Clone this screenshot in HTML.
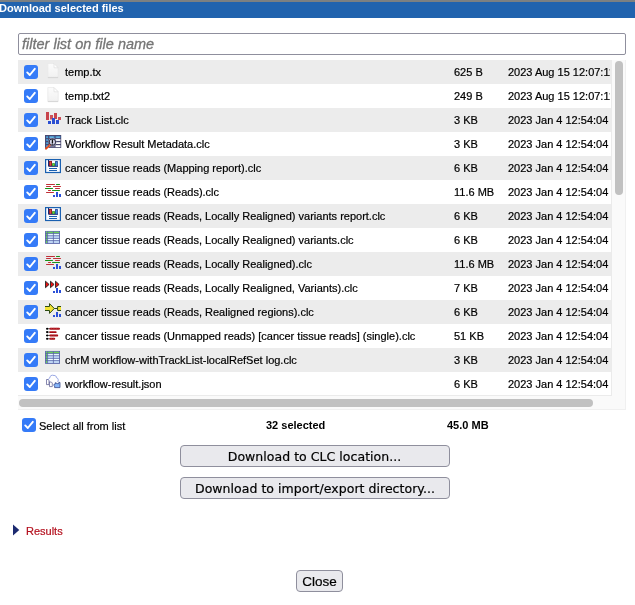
<!DOCTYPE html>
<html><head><meta charset="utf-8">
<style>
html,body{margin:0;padding:0;background:#fff;}
body{width:635px;height:605px;overflow:hidden;position:relative;font-family:"Liberation Sans",Arial,sans-serif;font-size:11px;color:#000;-webkit-text-stroke:0.2px currentColor;}
#w{position:absolute;left:0;top:0;width:635px;height:605px;will-change:transform;}
.topbar{position:absolute;left:0;top:0;width:635px;height:2px;background:#7c8082;}
.hdr{position:absolute;left:0;top:2px;width:635px;height:16px;background:#2163ae;color:#fff;font-weight:bold;font-size:11px;line-height:14px;white-space:nowrap;-webkit-text-stroke:0;}
.hdr span{position:absolute;left:-1px;top:0;transform:translateY(-0.75px);}
.filter{position:absolute;left:18px;top:33px;width:608px;height:22px;box-sizing:border-box;border:1px solid #8f8f9d;border-radius:2px;background:#fff;}
.filter span{position:absolute;left:3px;top:1px;font-style:italic;font-size:14.5px;line-height:18px;color:#757575;white-space:nowrap;-webkit-text-stroke:0.3px #757575;}
.list{position:absolute;left:18px;top:60px;width:608px;height:350px;overflow:hidden;background:#fff;}
.row{position:absolute;left:0;width:593px;height:24px;white-space:nowrap;overflow:hidden;}
.row.g{background:#ececec;}
.row .t{position:absolute;left:47px;top:0;line-height:24px;}
.row .s{position:absolute;left:436px;top:0;line-height:24px;}
.row .d{position:absolute;left:490px;top:0;line-height:24px;width:101.5px;overflow:hidden;}
.cb{position:absolute;width:14px;height:14px;border-radius:3px;background:#357bf8;}
.cb svg{position:absolute;left:0;top:0;}
.row .cb{left:6px;top:5px;}
.row .ic{position:absolute;left:27px;top:0;width:18px;height:24px;}
.vtrack{position:absolute;left:593px;top:0;width:15px;height:350px;background:#fafafa;box-sizing:border-box;border-left:1px solid #ebebeb;border-right:1px solid #f0f0f0;}
.vthumb{position:absolute;left:597px;top:1px;width:8px;height:134px;border-radius:4px;background:#c1c1c1;}
.htrack{position:absolute;left:0;top:335px;width:608px;height:15px;background:#fafafa;box-sizing:border-box;border-bottom:1px solid #f0f0f0;border-right:1px solid #f0f0f0;}
.htop{position:absolute;left:0;top:335px;width:594px;height:1px;background:#ebebeb;}
.hthumb{position:absolute;left:1px;top:339px;width:574px;height:8px;border-radius:4px;background:#c1c1c1;}
.selall{position:absolute;left:39px;top:419px;line-height:14px;}
.b{font-weight:bold;-webkit-text-stroke:0;}
.btn{position:absolute;box-sizing:border-box;border:1px solid #8f8f9d;border-radius:4px;background:#e9e9ed;letter-spacing:0.035px;padding-right:1px;font-family:"DejaVu Sans","Liberation Sans",sans-serif;font-size:12.5px;text-align:center;white-space:nowrap;color:#000;}
</style></head><body><div id="w">
<svg width="0" height="0" style="position:absolute"><defs><linearGradient id="dg" x1="0" y1="0" x2="0" y2="1"><stop offset="0" stop-color="#fcfcfc"/><stop offset="1" stop-color="#f1f1f1"/></linearGradient></defs></svg>
<div class="topbar"></div>
<div class="hdr"><span>Download selected files</span></div>
<div class="filter"><span>filter list on file name</span></div>
<div class="list" id="list">
<!--ROWS-->
<div class="row g" style="top:0px"><div class="cb"><svg width="14" height="14" viewBox="0 0 14 14"><path d="M3.2 7.4 L5.8 10 L10.8 3.8" fill="none" stroke="#fff" stroke-width="1.9" stroke-linecap="round" stroke-linejoin="round"/></svg></div><svg class="ic" width="18" height="24" viewBox="0 0 18 24"><path d="M2.8 3.6 H9 L13.2 7.8 V17.3 H2.8 Z" fill="url(#dg)" stroke="#e8e8e8" stroke-width="0.8"/><path d="M2.9 17.6 H13.1" stroke="#d2d2d2" stroke-width="0.9"/><path d="M9 3.6 V7.8 H13.2 Z" fill="#fefefe" stroke="#e0e0e0" stroke-width="0.7"/></svg><span class="t">temp.tx</span><span class="s">625 B</span><span class="d">2023 Aug 15 12:07:11</span></div>
<div class="row" style="top:24px"><div class="cb"><svg width="14" height="14" viewBox="0 0 14 14"><path d="M3.2 7.4 L5.8 10 L10.8 3.8" fill="none" stroke="#fff" stroke-width="1.9" stroke-linecap="round" stroke-linejoin="round"/></svg></div><svg class="ic" width="18" height="24" viewBox="0 0 18 24"><path d="M2.8 3.6 H9 L13.2 7.8 V17.3 H2.8 Z" fill="url(#dg)" stroke="#e8e8e8" stroke-width="0.8"/><path d="M2.9 17.6 H13.1" stroke="#d2d2d2" stroke-width="0.9"/><path d="M9 3.6 V7.8 H13.2 Z" fill="#fefefe" stroke="#e0e0e0" stroke-width="0.7"/></svg><span class="t">temp.txt2</span><span class="s">249 B</span><span class="d">2023 Aug 15 12:07:11</span></div>
<div class="row g" style="top:48px"><div class="cb"><svg width="14" height="14" viewBox="0 0 14 14"><path d="M3.2 7.4 L5.8 10 L10.8 3.8" fill="none" stroke="#fff" stroke-width="1.9" stroke-linecap="round" stroke-linejoin="round"/></svg></div><svg class="ic" width="18" height="24" viewBox="0 0 18 24"><rect x="1" y="4" width="3" height="8" fill="#c8444c"/><rect x="5" y="7" width="3" height="4.5" fill="#cc5058"/><rect x="9" y="5" width="3" height="6" fill="#c8444c"/><rect x="13" y="9" width="3" height="3" fill="#cc5058"/><rect x="3" y="13" width="3" height="3" fill="#2a4ed2"/><rect x="7" y="10" width="3" height="6" fill="#2a4ed2"/><rect x="11" y="12" width="3" height="4" fill="#2a4ed2"/></svg><span class="t">Track List.clc</span><span class="s">3 KB</span><span class="d">2023 Jan 4 12:54:04</span></div>
<div class="row" style="top:72px"><div class="cb"><svg width="14" height="14" viewBox="0 0 14 14"><path d="M3.2 7.4 L5.8 10 L10.8 3.8" fill="none" stroke="#fff" stroke-width="1.9" stroke-linecap="round" stroke-linejoin="round"/></svg></div><svg class="ic" width="18" height="24" viewBox="0 0 18 24"><rect x="0" y="3" width="16.2" height="12.9" fill="#4a4a72"/><rect x="1.1" y="4.2" width="2" height="1.9" fill="#3a92cc"/><rect x="4.1" y="4.2" width="5.4" height="1.9" fill="#3a92cc"/><rect x="10.5" y="4.2" width="4.9" height="1.9" fill="#3a92cc"/><rect x="5" y="4.7" width="3.6" height="0.9" fill="#8cc8ee"/><rect x="11.3" y="4.7" width="3.4" height="0.9" fill="#8cc8ee"/><rect x="1.7" y="4.7" width="0.8" height="0.9" fill="#8cc8ee"/><rect x="1.1" y="7.1" width="2" height="1.8" fill="#3a92cc"/><rect x="4.1" y="7.1" width="5.4" height="1.8" fill="#7a7a9a"/><rect x="10.5" y="7.1" width="4.9" height="1.8" fill="#fff"/><rect x="1.7" y="7.6" width="0.8" height="0.9" fill="#8cc8ee"/><rect x="1.1" y="10.2" width="2" height="1.8" fill="#3a92cc"/><rect x="4.1" y="10.2" width="5.4" height="1.8" fill="#7a7a9a"/><rect x="10.5" y="10.2" width="4.9" height="1.8" fill="#fff"/><rect x="1.7" y="10.7" width="0.8" height="0.9" fill="#8cc8ee"/><rect x="1.1" y="13.2" width="2" height="1.9" fill="#3a92cc"/><rect x="4.1" y="13.2" width="5.4" height="1.9" fill="#7a7a9a"/><rect x="10.5" y="13.2" width="4.9" height="1.9" fill="#fff"/><rect x="1.7" y="13.7" width="0.8" height="0.9" fill="#8cc8ee"/><circle cx="7.4" cy="10.1" r="4" fill="#9c9cba"/><circle cx="7.4" cy="10.1" r="3.2" fill="#d2d2e8" stroke="#2a2a3c" stroke-width="1"/><circle cx="6.4" cy="9" r="1" fill="#f4f4ff" fill-opacity="0.8"/><path d="M7.4 7.9 V10.7" stroke="#111" stroke-width="1.3" stroke-linecap="round"/><circle cx="7.4" cy="12.1" r="0.7" fill="#111"/><path d="M4.7 13.3 L0.9 16.7" stroke="#e2481a" stroke-width="1.9" stroke-linecap="round"/><path d="M3.9 13.5 L4.9 14.4 M2.6 14.7 L3.6 15.6" stroke="#ffd0b0" stroke-width="0.5"/></svg><span class="t">Workflow Result Metadata.clc</span><span class="s">3 KB</span><span class="d">2023 Jan 4 12:54:04</span></div>
<div class="row g" style="top:96px"><div class="cb"><svg width="14" height="14" viewBox="0 0 14 14"><path d="M3.2 7.4 L5.8 10 L10.8 3.8" fill="none" stroke="#fff" stroke-width="1.9" stroke-linecap="round" stroke-linejoin="round"/></svg></div><svg class="ic" width="18" height="24" viewBox="0 0 18 24"><rect x="0.6" y="3.6" width="14.8" height="12.9" fill="#fafcff" stroke="#1a60b0" stroke-width="1.2"/><rect x="4" y="4.9" width="3" height="5.2" fill="#8a1522"/><rect x="4.7" y="5.7" width="1.5" height="4.4" fill="#e04a40"/><rect x="7.1" y="7.2" width="2.8" height="3" fill="#2a8a20"/><rect x="7.8" y="7.9" width="1.4" height="2.2" fill="#66dd33"/><rect x="10.1" y="5.1" width="2.7" height="5" fill="#1a3a90"/><rect x="10.8" y="5.9" width="1.3" height="4.2" fill="#3a90e0"/><path d="M3.5 4 V10.3 H13" stroke="#1a2a70" stroke-width="1" fill="none"/><path d="M4 12.5 H12 M4 14.5 H12" stroke="#1a60b0" stroke-width="1"/></svg><span class="t">cancer tissue reads (Mapping report).clc</span><span class="s">6 KB</span><span class="d">2023 Jan 4 12:54:04</span></div>
<div class="row" style="top:120px"><div class="cb"><svg width="14" height="14" viewBox="0 0 14 14"><path d="M3.2 7.4 L5.8 10 L10.8 3.8" fill="none" stroke="#fff" stroke-width="1.9" stroke-linecap="round" stroke-linejoin="round"/></svg></div><svg class="ic" width="18" height="24" viewBox="0 0 18 24"><path d="M1.5 4.5 H9.5 M1.5 6.5 H5.5 M8.5 6.5 H15.5 M10.5 8.5 H14.5 M3.5 10.5 H5.5 M1.5 12.5 H8.5" stroke="#c03038" stroke-width="1" stroke-linecap="round"/><path d="M11.5 4.5 H14.5 M0.5 8.5 H7.5 M7.5 10.5 H14.5" stroke="#189018" stroke-width="1" stroke-linecap="round"/><rect x="8" y="15" width="2" height="2" fill="#2a50d8"/><rect x="11" y="12" width="2" height="5" fill="#2a50d8"/><rect x="14" y="14" width="2" height="3" fill="#2a50d8"/></svg><span class="t">cancer tissue reads (Reads).clc</span><span class="s">11.6 MB</span><span class="d">2023 Jan 4 12:54:04</span></div>
<div class="row g" style="top:144px"><div class="cb"><svg width="14" height="14" viewBox="0 0 14 14"><path d="M3.2 7.4 L5.8 10 L10.8 3.8" fill="none" stroke="#fff" stroke-width="1.9" stroke-linecap="round" stroke-linejoin="round"/></svg></div><svg class="ic" width="18" height="24" viewBox="0 0 18 24"><rect x="0.6" y="3.6" width="14.8" height="12.9" fill="#fafcff" stroke="#1a60b0" stroke-width="1.2"/><rect x="4" y="4.9" width="3" height="5.2" fill="#8a1522"/><rect x="4.7" y="5.7" width="1.5" height="4.4" fill="#e04a40"/><rect x="7.1" y="7.2" width="2.8" height="3" fill="#2a8a20"/><rect x="7.8" y="7.9" width="1.4" height="2.2" fill="#66dd33"/><rect x="10.1" y="5.1" width="2.7" height="5" fill="#1a3a90"/><rect x="10.8" y="5.9" width="1.3" height="4.2" fill="#3a90e0"/><path d="M3.5 4 V10.3 H13" stroke="#1a2a70" stroke-width="1" fill="none"/><path d="M4 12.5 H12 M4 14.5 H12" stroke="#1a60b0" stroke-width="1"/></svg><span class="t">cancer tissue reads (Reads, Locally Realigned) variants report.clc</span><span class="s">6 KB</span><span class="d">2023 Jan 4 12:54:04</span></div>
<div class="row" style="top:168px"><div class="cb"><svg width="14" height="14" viewBox="0 0 14 14"><path d="M3.2 7.4 L5.8 10 L10.8 3.8" fill="none" stroke="#fff" stroke-width="1.9" stroke-linecap="round" stroke-linejoin="round"/></svg></div><svg class="ic" width="18" height="24" viewBox="0 0 18 24"><rect x="0.55" y="3.4" width="14" height="12" fill="#c4dcf8" stroke="#5a64a8" stroke-width="0.9"/><rect x="1" y="3.8" width="13.2" height="1.6" fill="#6ad058"/><rect x="1" y="3.8" width="1.4" height="11.2" fill="#6ad058"/><rect x="2.8" y="5.8" width="11.2" height="1.5" fill="#eefcff"/><rect x="2.8" y="10.8" width="11.2" height="1.4" fill="#eefcff"/><path d="M0.5 5.55 H14.5 M0.5 7.75 H14.5 M0.5 10.4 H14.5 M0.5 12.6 H14.5" stroke="#4a58a0" stroke-width="0.7" fill="none"/><path d="M2.6 3.5 V15.4 M8.4 3.5 V15.4" stroke="#5a64a8" stroke-width="0.8" fill="none"/></svg><span class="t">cancer tissue reads (Reads, Locally Realigned) variants.clc</span><span class="s">6 KB</span><span class="d">2023 Jan 4 12:54:04</span></div>
<div class="row g" style="top:192px"><div class="cb"><svg width="14" height="14" viewBox="0 0 14 14"><path d="M3.2 7.4 L5.8 10 L10.8 3.8" fill="none" stroke="#fff" stroke-width="1.9" stroke-linecap="round" stroke-linejoin="round"/></svg></div><svg class="ic" width="18" height="24" viewBox="0 0 18 24"><path d="M1.5 4.5 H9.5 M1.5 6.5 H5.5 M8.5 6.5 H15.5 M10.5 8.5 H14.5 M3.5 10.5 H5.5 M1.5 12.5 H8.5" stroke="#c03038" stroke-width="1" stroke-linecap="round"/><path d="M11.5 4.5 H14.5 M0.5 8.5 H7.5 M7.5 10.5 H14.5" stroke="#189018" stroke-width="1" stroke-linecap="round"/><rect x="8" y="15" width="2" height="2" fill="#2a50d8"/><rect x="11" y="12" width="2" height="5" fill="#2a50d8"/><rect x="14" y="14" width="2" height="3" fill="#2a50d8"/></svg><span class="t">cancer tissue reads (Reads, Locally Realigned).clc</span><span class="s">11.6 MB</span><span class="d">2023 Jan 4 12:54:04</span></div>
<div class="row" style="top:216px"><div class="cb"><svg width="14" height="14" viewBox="0 0 14 14"><path d="M3.2 7.4 L5.8 10 L10.8 3.8" fill="none" stroke="#fff" stroke-width="1.9" stroke-linecap="round" stroke-linejoin="round"/></svg></div><svg class="ic" width="18" height="24" viewBox="0 0 18 24"><path d="M0.5 5.2 L4.1 8.45 L0.5 11.7 Z" fill="#f01010" stroke="#222" stroke-width="0.9"/><path d="M5.5 5.2 L9.1 8.45 L5.5 11.7 Z" fill="#f01010" stroke="#222" stroke-width="0.9"/><path d="M10.5 5.2 L14.1 8.45 L10.5 11.7 Z" fill="#f01010" stroke="#222" stroke-width="0.9"/><rect x="8" y="15" width="2" height="2" fill="#2a50d8"/><rect x="11" y="12" width="2" height="5" fill="#2a50d8"/><rect x="14" y="14" width="2" height="3" fill="#2a50d8"/></svg><span class="t">cancer tissue reads (Reads, Locally Realigned, Variants).clc</span><span class="s">7 KB</span><span class="d">2023 Jan 4 12:54:04</span></div>
<div class="row g" style="top:240px"><div class="cb"><svg width="14" height="14" viewBox="0 0 14 14"><path d="M3.2 7.4 L5.8 10 L10.8 3.8" fill="none" stroke="#fff" stroke-width="1.9" stroke-linecap="round" stroke-linejoin="round"/></svg></div><svg class="ic" width="18" height="24" viewBox="0 0 18 24"><path d="M0 6.5 H4.5 V3.6 L9.3 8.5 L4.5 13.4 V10.5 H0 Z" fill="#f2e232"/><path d="M0 6.5 H4.5 V3.6 L9.3 8.5 L4.5 13.4 V10.5 H0" fill="none" stroke="#2a4a10" stroke-width="1"/><path d="M9.3 8.5 H12.5" stroke="#2a4a10" stroke-width="1"/><rect x="12.5" y="6.5" width="3.5" height="4" fill="#f2e232"/><path d="M16 6.5 H12.6 V10.5 H16" fill="none" stroke="#2a4a10" stroke-width="1"/><rect x="8" y="15" width="2" height="2" fill="#2a50d8"/><rect x="11" y="12" width="2" height="5" fill="#2a50d8"/><rect x="14" y="14" width="2" height="3" fill="#2a50d8"/></svg><span class="t">cancer tissue reads (Reads, Realigned regions).clc</span><span class="s">6 KB</span><span class="d">2023 Jan 4 12:54:04</span></div>
<div class="row" style="top:264px"><div class="cb"><svg width="14" height="14" viewBox="0 0 14 14"><path d="M3.2 7.4 L5.8 10 L10.8 3.8" fill="none" stroke="#fff" stroke-width="1.9" stroke-linecap="round" stroke-linejoin="round"/></svg></div><svg class="ic" width="18" height="24" viewBox="0 0 18 24"><path d="M1 4.75 H5" stroke="#111" stroke-width="0.7"/><circle cx="2.2" cy="4.75" r="1.05" fill="#000"/><rect x="4.4" y="3.8" width="10.6" height="1.9" rx="0.9" fill="#a40c14"/><path d="M5.5 4.25 H13.8" stroke="#d85058" stroke-width="0.5" stroke-dasharray="1.6 1"/><path d="M1 8.1 H5" stroke="#111" stroke-width="0.7"/><circle cx="2.2" cy="8.1" r="1.05" fill="#000"/><rect x="4.4" y="7.1499999999999995" width="7.2" height="1.9" rx="0.9" fill="#a40c14"/><path d="M5.5 7.6 H10.4" stroke="#d85058" stroke-width="0.5" stroke-dasharray="1.6 1"/><path d="M1 11.45 H5" stroke="#111" stroke-width="0.7"/><circle cx="2.2" cy="11.45" r="1.05" fill="#000"/><rect x="4.4" y="10.5" width="8.8" height="1.9" rx="0.9" fill="#a40c14"/><path d="M5.5 10.95 H12.0" stroke="#d85058" stroke-width="0.5" stroke-dasharray="1.6 1"/><path d="M1 14.8 H5" stroke="#111" stroke-width="0.7"/><circle cx="2.2" cy="14.8" r="1.05" fill="#000"/><rect x="4.4" y="13.850000000000001" width="5.8" height="1.9" rx="0.9" fill="#a40c14"/><path d="M5.5 14.3 H9.0" stroke="#d85058" stroke-width="0.5" stroke-dasharray="1.6 1"/></svg><span class="t">cancer tissue reads (Unmapped reads) [cancer tissue reads] (single).clc</span><span class="s">51 KB</span><span class="d">2023 Jan 4 12:54:04</span></div>
<div class="row g" style="top:288px"><div class="cb"><svg width="14" height="14" viewBox="0 0 14 14"><path d="M3.2 7.4 L5.8 10 L10.8 3.8" fill="none" stroke="#fff" stroke-width="1.9" stroke-linecap="round" stroke-linejoin="round"/></svg></div><svg class="ic" width="18" height="24" viewBox="0 0 18 24"><rect x="0.55" y="3.4" width="14" height="12" fill="#c4dcf8" stroke="#5a64a8" stroke-width="0.9"/><rect x="1" y="3.8" width="13.2" height="1.6" fill="#6ad058"/><rect x="1" y="3.8" width="1.4" height="11.2" fill="#6ad058"/><rect x="2.8" y="5.8" width="11.2" height="1.5" fill="#eefcff"/><rect x="2.8" y="10.8" width="11.2" height="1.4" fill="#eefcff"/><path d="M0.5 5.55 H14.5 M0.5 7.75 H14.5 M0.5 10.4 H14.5 M0.5 12.6 H14.5" stroke="#4a58a0" stroke-width="0.7" fill="none"/><path d="M2.6 3.5 V15.4 M8.4 3.5 V15.4" stroke="#5a64a8" stroke-width="0.8" fill="none"/></svg><span class="t">chrM workflow-withTrackList-localRefSet log.clc</span><span class="s">3 KB</span><span class="d">2023 Jan 4 12:54:04</span></div>
<div class="row" style="top:312px"><div class="cb"><svg width="14" height="14" viewBox="0 0 14 14"><path d="M3.2 7.4 L5.8 10 L10.8 3.8" fill="none" stroke="#fff" stroke-width="1.9" stroke-linecap="round" stroke-linejoin="round"/></svg></div><svg class="ic" width="18" height="24" viewBox="0 0 18 24"><path d="M4.6 9.8 C3 9.2 2.8 6.6 4.7 6.1 C4.6 3.8 7 2.6 9 3.5 C10.3 3.2 11.6 4.4 11.4 5.6 C13.5 6 13.7 9 12.6 10" fill="#fff" stroke="#8c9ce0" stroke-width="0.9"/><path d="M1.5 7.5 H3 L4 8.5 V12.6 H1.5 Z" fill="#fff" stroke="#55558c" stroke-width="0.7"/><path d="M4.5 10 H6.3 L7.3 11 V14.6 H4.5 Z" fill="#fff" stroke="#55558c" stroke-width="0.7"/><path d="M9.2 12 L10.6 11.8 L10.4 10.6 L12.2 11.6 L13.4 11.8 L13.8 10.4 L15 10.4 V15.6 H9.6 V14 L8.8 13.2 Z" fill="#86b6fa" stroke="#26367c" stroke-width="0.7"/></svg><span class="t">workflow-result.json</span><span class="s">6 KB</span><span class="d">2023 Jan 4 12:54:04</span></div>
<!--/ROWS-->
<div class="vtrack"></div><div class="vthumb"></div>
<div class="htrack"></div><div class="htop"></div><div class="hthumb"></div>
</div>
<div class="cb" style="left:22px;top:418px"><svg width="14" height="14" viewBox="0 0 14 14"><path d="M3.2 7.4 L5.8 10 L10.8 3.8" fill="none" stroke="#fff" stroke-width="1.9" stroke-linecap="round" stroke-linejoin="round"/></svg></div>
<div class="selall">Select all from list</div>
<div class="b" style="position:absolute;left:266px;top:418px;line-height:14px">32 selected</div>
<div class="b" style="position:absolute;left:447px;top:418px;line-height:14px">45.0 MB</div>
<div class="btn" style="left:180px;top:445px;width:270px;height:22px;line-height:22px">Download to CLC location...</div>
<div class="btn" style="left:180px;top:477px;width:270px;height:22px;line-height:22px;padding-right:0">Download to import/export directory...</div>
<svg style="position:absolute;left:12px;top:524px" width="10" height="12" viewBox="0 0 10 12"><path d="M1 0.6 L7.3 6 L1 11.4 Z" fill="#1c2a70"/></svg>
<div style="position:absolute;left:26px;top:524px;line-height:14px;color:#b4101e">Results</div>
<div class="btn" style="left:296px;top:570px;width:47px;height:22px;line-height:22px;font-family:'Liberation Sans',sans-serif;font-size:13.5px;letter-spacing:0;padding-right:0">Close</div>
</div></body></html>
